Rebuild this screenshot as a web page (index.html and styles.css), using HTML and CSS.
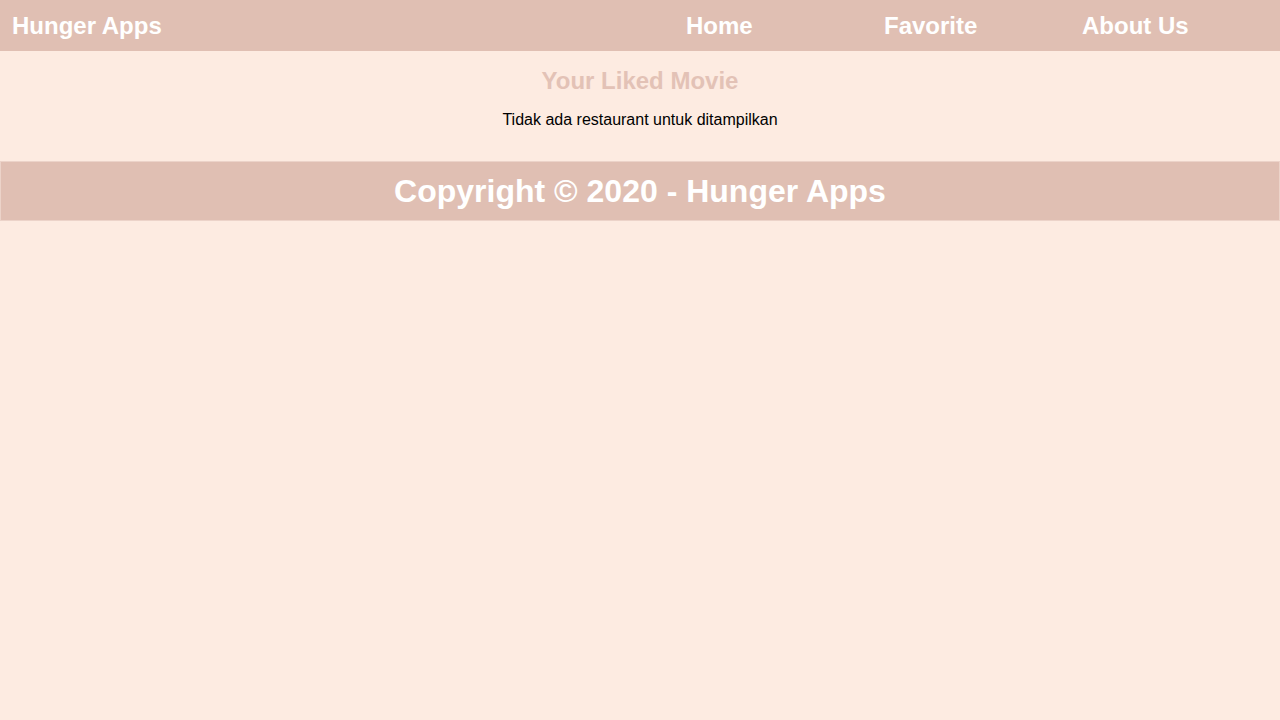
FILE: index.html
```html
<!DOCTYPE html>
<html lang="id">
<head>
<meta charset="utf-8">
<title>Hunger Apps</title>
<link rel="stylesheet" href="styles.css">
</head>
<body>
<header class="app-bar">
  <div class="brand">Hunger Apps</div>
  <nav class="nav">
    <ul class="nav-list">
      <li class="nav-item"><a href="#" class="nav-link">Home</a></li>
      <li class="nav-item"><a href="#" class="nav-link">Favorite</a></li>
      <li class="nav-item"><a href="#" class="nav-link">About Us</a></li>
    </ul>
  </nav>
</header>
<main class="content">
  <h2 class="content-title">Your Liked Movie</h2>
  <p class="empty-text">Tidak ada restaurant untuk ditampilkan</p>
</main>
<footer class="footer">
  <p class="footer-text">Copyright © 2020 - Hunger Apps</p>
</footer>
</body>
</html>
```
FILE: styles.css
```css
html, body {
  margin: 0;
  padding: 0;
  background: #fdebe1;
  font-family: "Liberation Sans", Arial, sans-serif;
}

.app-bar {
  height: 51px;
  background: #e0bfb3;
  display: flex;
  align-items: center;
  justify-content: space-between;
}

.brand {
  color: #ffffff;
  font-size: 24px;
  font-weight: bold;
  padding-left: 12px;
}

.nav-list {
  list-style: none;
  margin: 0;
  padding: 0;
  display: flex;
}

.nav-item {
  width: 198px;
}

.nav-link {
  color: #ffffff;
  font-size: 24px;
  font-weight: bold;
  text-decoration: none;
}

.content {
  padding-top: 16px;
  padding-bottom: 32px;
  text-align: center;
}

.content-title {
  margin: 0 0 16px;
  font-size: 24px;
  font-weight: bold;
  color: #e3c2b6;
}

.empty-text {
  margin: 0;
  font-size: 16px;
  color: #000000;
}

.footer {
  height: 58px;
  background: #e0bfb3;
  border: 1px solid #ecd3c9;
  display: flex;
  align-items: center;
  justify-content: center;
}

.footer-text {
  margin: 0;
  color: #ffffff;
  font-size: 32px;
  font-weight: bold;
}
```
